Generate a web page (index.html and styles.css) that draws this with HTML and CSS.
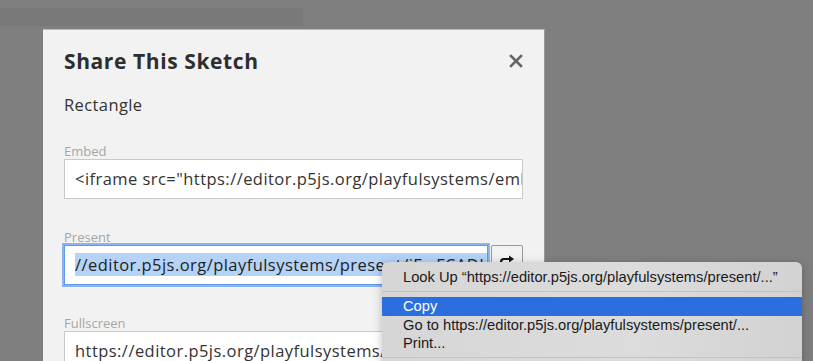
FILE: index.html
```html
<!DOCTYPE html>
<html lang="en">
  <head>
    <meta charset="UTF-8" />
    <title>Share This Sketch</title>
    <link rel="stylesheet" href="styles.css">
  </head>
  <body>
    <div class="page">
      <div class="toolbar"></div>
    </div>

    <div class="overlay">
      <section class="modal">
        <header class="modal-header">
          <h2 class="modal-title">Share This Sketch</h2>
          <button class="modal-close" aria-label="Close">
            <svg width="14" height="14" viewBox="0 0 14 14">
              <path d="M2 2 L12 12 M12 2 L2 12" stroke="#666" stroke-width="2.6" stroke-linecap="square" />
            </svg>
          </button>
        </header>

        <p class="sketch-name">Rectangle</p>

        <div class="field">
          <label class="field-label">Embed</label>
          <div class="field-row">
            <div class="field-input">&lt;iframe src="https://editor.p5js.org/playfulsystems/embed/jEwFCADLY"&gt;&lt;/iframe&gt;</div>
          </div>
        </div>

        <div class="field">
          <label class="field-label">Present</label>
          <div class="field-row">
            <div class="field-input focused"><span class="selected">//editor.p5js.org/playfulsystems/present/jEwFCADLY</span></div>
            <button class="copy-button">
              <svg width="16" height="12" viewBox="0 0 16 12">
                <path d="M2 11 V7 C2 5 3 4 5 4 H11" fill="none" stroke="#111" stroke-width="2.2" />
                <path d="M10 0.5 L15 4 L10 7.5 Z" fill="#111" />
              </svg>
            </button>
          </div>
        </div>

        <div class="field">
          <label class="field-label">Fullscreen</label>
          <div class="field-row">
            <div class="field-input">https://editor.p5js.org/playfulsystems/full/jEwFCADLY</div>
          </div>
        </div>
      </section>
    </div>

    <ul class="context-menu">
      <li class="menu-item">Look Up “https://editor.p5js.org/playfulsystems/present/...”</li>
      <li class="menu-separator"></li>
      <li class="menu-item active">Copy</li>
      <li class="menu-item">Go to https://editor.p5js.org/playfulsystems/present/...</li>
      <li class="menu-item">Print...</li>
      <li class="menu-separator"></li>
    </ul>
  </body>
</html>
```

FILE: styles.css
```css
* {
  margin: 0;
  padding: 0;
  box-sizing: border-box;
}

:root {
  --backdrop: #7f7f7f;
  --modal-bg: #f2f2f2;
  --text-primary: #333333;
  --label: #a6a6a6;
  --input-border: #c9c9c9;
  --focus: #5f9bf0;
  --selection: #b4d3f7;
  --menu-bg: #d8d8d8;
  --menu-active: #2a6ee0;
}

html,
body {
  width: 813px;
  height: 361px;
  overflow: hidden;
}

body {
  background-color: var(--backdrop);
  font-family: "Open Sans", sans-serif;
  color: var(--text-primary);
  position: relative;
}

.page {
  padding-top: 8px;
}

.toolbar {
  width: 303px;
  height: 18px;
  background-color: #797979;
}

.overlay {
  position: absolute;
  left: 43px;
  top: 29px;
}

.modal {
  width: 502px;
  height: 332px;
  overflow: hidden;
  background-color: var(--modal-bg);
  border-top: 1px solid #b9b9b9;
  border-right: 1px solid #9a9a9a;
  padding: 15px 21px 0 21px;
}

.modal-header {
  display: flex;
  justify-content: space-between;
  align-items: center;
  height: 32px;
}

.modal-title {
  font-size: 21px;
  font-weight: 700;
  color: #2e2e2e;
  letter-spacing: 0.6px;
}

.modal-close {
  border: none;
  background: none;
  display: flex;
}

.sketch-name {
  font-size: 16.5px;
  letter-spacing: 0.4px;
  margin-top: 16px;
  margin-bottom: 28px;
  color: #333;
}

.field {
  margin-bottom: 31px;
}

.field-label {
  display: block;
  font-size: 13px;
  color: var(--label);
  height: 15px;
  line-height: 15px;
}

.field-row {
  display: flex;
  gap: 3px;
}

.field-input {
  flex: 1;
  height: 40px;
  background-color: #ffffff;
  border: 1px solid var(--input-border);
  padding: 0 10px;
  font-size: 16.5px;
  letter-spacing: 0.45px;
  line-height: 38px;
  white-space: nowrap;
  overflow: hidden;
  color: #333;
}

.field-input.focused {
  border: 1px solid var(--focus);
  box-shadow: 0 0 0 2px rgba(95, 155, 240, 0.7);
  color: #222;
}

.selected {
  background-color: var(--selection);
}

.copy-button {
  width: 32px;
  height: 40px;
  border: 1px solid #9a9a9a;
  border-radius: 2px;
  background-color: #f2f2f2;
  display: flex;
  align-items: center;
  justify-content: center;
  padding-bottom: 8px;
}

.context-menu {
  position: absolute;
  left: 382px;
  top: 262px;
  width: 420px;
  height: 110px;
  list-style: none;
  background: linear-gradient(90deg, #d6d6d6, #dcdcdc 60%, #d2d2d2);
  border-radius: 6px 6px 0 0;
  box-shadow: 0 2px 10px rgba(0, 0, 0, 0.25);
  padding-top: 6px;
  font-family: "Liberation Sans", sans-serif;
  font-size: 14.7px;
  color: #1a1a1a;
}

.menu-item {
  height: 18px;
  line-height: 18px;
  padding-left: 21px;
}

.menu-item.active {
  background-color: var(--menu-active);
  color: #ffffff;
  height: 19px;
  line-height: 19px;
}

.menu-separator {
  height: 1px;
  background-color: #c2c2c2;
  margin: 5px 0 5px;
}
```
